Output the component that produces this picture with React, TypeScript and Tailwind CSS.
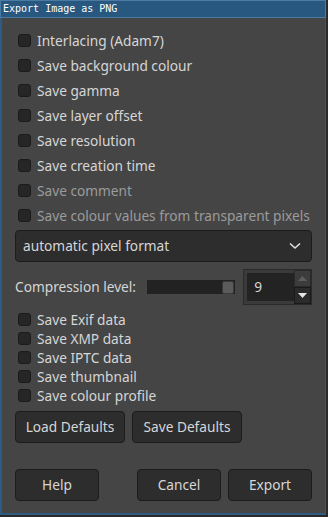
import React from 'react';

const font = { fontFamily: '"Noto Sans", "Open Sans", sans-serif' };

function Check({ label, disabled, h }: { label: string; disabled?: boolean; h: string }) {
  return (
    <div className={`flex items-center ${h} pl-[3px]`}>
      <span className="w-[13px] h-[13px] rounded-[3px] bg-[#262626] border border-[#1b1b1b] shrink-0" />
      <span
        className={`ml-[6px] text-[13.7px] leading-none whitespace-nowrap ${disabled ? 'text-[#9b9b9b]' : 'text-[#d6d6d6]'}`}
      >
        {label}
      </span>
    </div>
  );
}

function Btn({ label, w }: { label: string; w: string }) {
  return (
    <button
      className={`${w} h-[32px] rounded-[4px] bg-[#2d2d2d] border border-[#1c1c1c] text-[13.7px] text-[#d6d6d6] flex items-center justify-center`}
    >
      {label}
    </button>
  );
}

export default function App() {
  const top = [
    ['Interlacing (Adam7)', false],
    ['Save background colour', false],
    ['Save gamma', false],
    ['Save layer offset', false],
    ['Save resolution', false],
    ['Save creation time', false],
    ['Save comment', true],
    ['Save colour values from transparent pixels', true],
  ] as const;
  const bottom = ['Save Exif data', 'Save XMP data', 'Save IPTC data', 'Save thumbnail', 'Save colour profile'];

  return (
    <div className="w-[328px] h-[517px] bg-[#2a2a2a]" style={font}>
      <div className="w-[326px] h-[515px] flex flex-col bg-[#2d5b81] p-[2px] pt-0 pr-[1px]">
        {/* Title bar */}
        <div className="h-[18px] -mx-[2px] -mr-[1px] bg-[#285780] border border-[#4b7ba3] flex items-center pl-[2px]">
          <span
            className="text-[10px] leading-none text-white"
            style={{ fontFamily: '"DejaVu Sans Mono", monospace' }}
          >
            Export Image as PNG
          </span>
        </div>

        {/* Body */}
        <div className="flex-1 bg-[#454545] flex flex-col pl-[13px] pr-[13px] pt-[10px]">
          <div className="flex flex-col">
            {top.map(([l, d]) => (
              <Check key={l} label={l} disabled={d} h="h-[25px]" />
            ))}
          </div>

          {/* Combo */}
          <div className="mt-[2px] h-[32px] rounded-[4px] bg-[#2d2d2d] border border-[#1c1c1c] flex items-center justify-between pl-[7px] pr-[10px]">
            <span className="text-[13.7px] text-[#d6d6d6]">automatic pixel format</span>
            <svg width="12" height="8" viewBox="0 0 12 8">
              <path d="M1 1.5 L6 6 L11 1.5" stroke="#e0e0e0" strokeWidth="1.6" fill="none" />
            </svg>
          </div>

          {/* Compression */}
          <div className="mt-[7px] flex items-center h-[36px]">
            <span className="text-[13.7px] text-[#d6d6d6] w-[132px] whitespace-nowrap">Compression level:</span>
            <div className="w-[89px] h-[14px] bg-[#222222] flex items-center justify-end pr-[1px]">
              <span className="w-[12px] h-[13px] rounded-[2px] bg-[#5b5b5b] border border-[#3a3a3a]" />
            </div>
            <div className="ml-[8px] w-[69px] h-[36px] bg-[#3a3a3a] border border-[#2a2a2a] flex pl-[3px]">
              <div className="flex-1 my-[3px] bg-[#232323] flex items-center pl-[7px]">
                <span className="text-[13.7px] text-[#d6d6d6]">9</span>
              </div>
              <div className="w-[17px] flex flex-col">
                <div className="h-[17px] bg-[#3c3c3c] border border-[#2a2a2a] flex items-center justify-center">
                  <svg width="9" height="5" viewBox="0 0 9 5">
                    <path d="M0 5 L4.5 0 L9 5 Z" fill="#5e5e5e" />
                  </svg>
                </div>
                <div className="flex-1 bg-[#2b2b2b] border border-[#1a1a1a] flex items-center justify-center">
                  <svg width="9" height="5" viewBox="0 0 9 5">
                    <path d="M0 0 L4.5 5 L9 0 Z" fill="#e6e6e6" />
                  </svg>
                </div>
              </div>
            </div>
          </div>

          <div className="mt-[5px] flex flex-col">
            {bottom.map((l) => (
              <Check key={l} label={l} h="h-[19px]" />
            ))}
          </div>

          <div className="mt-[6px] flex gap-[7px]">
            <Btn label="Load Defaults" w="w-[110px]" />
            <Btn label="Save Defaults" w="w-[110px]" />
          </div>

          <div className="mt-[26px] flex">
            <Btn label="Help" w="w-[84px]" />
            <div className="flex-1" />
            <Btn label="Cancel" w="w-[84px]" />
            <div className="w-[7px]" />
            <Btn label="Export" w="w-[84px]" />
          </div>
        </div>
      </div>
    </div>
  );
}
